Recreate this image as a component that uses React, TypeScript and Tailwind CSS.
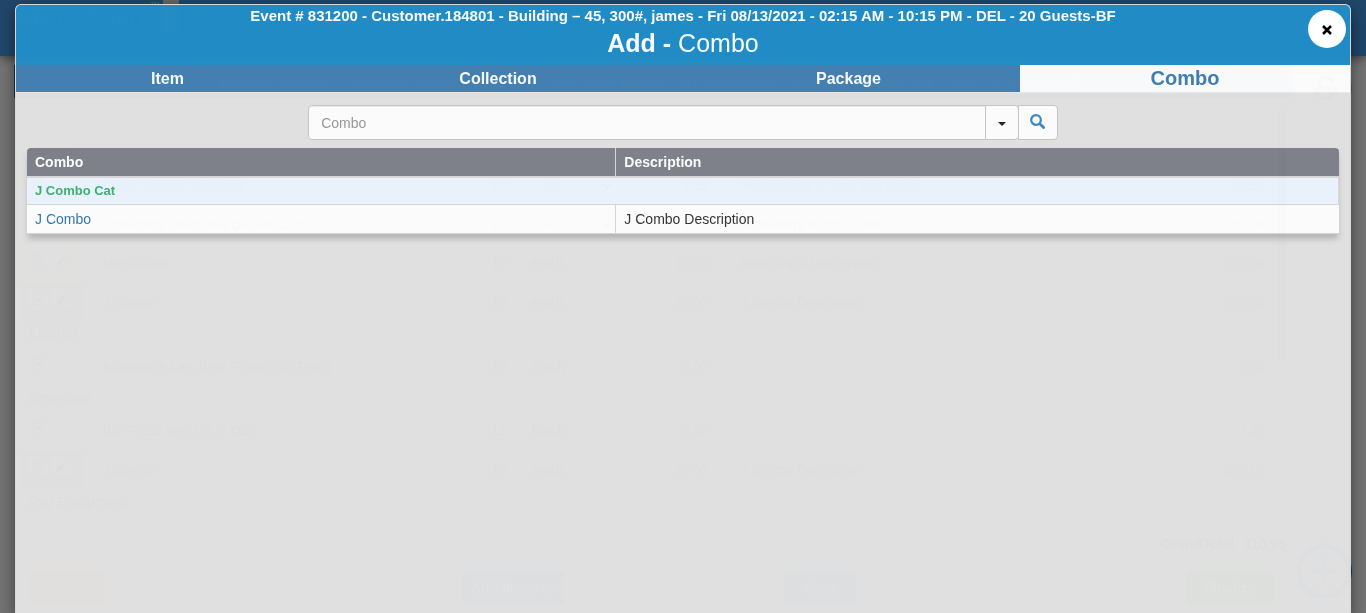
import React from "react";

type Line = {
  name: string;
  qty: string;
  unit: string;
  price: string;
  description: string;
  total: string;
  kind?: "pack" | "combo";
  picker?: boolean;
};

type Section = { title: string; lines: Line[] };

const sections: Section[] = [
  {
    title: "Menu",
    lines: [
      { name: "Cajun Seafood Sausage", qty: "10", unit: "ea", price: "3.25", description: "Housemade Shrimp and Sausage", total: "32.50", picker: true },
      { name: "Strawberry Shortcake Dessert Cup", qty: "20", unit: "ea", price: "2.50", description: "Strawberry Panna Cotta,", total: "50.00", picker: true },
      { name: "Menu Pack", qty: "10", unit: "each", price: "10.00", description: "Menu Pack Description", total: "100.00", kind: "pack" },
      { name: "J Combo", qty: "10", unit: "each", price: "20.00", description: "J Combo Description", total: "200.00", kind: "combo" },
    ],
  },
  {
    title: "Alcohol",
    lines: [{ name: "Ridgewells Eats Beer Promo (Six Pack)", qty: "10", unit: "Each", price: "0.00", description: "", total: "0.00" }],
  },
  {
    title: "Beverage",
    lines: [
      { name: "BOTTLED WATER (8 OZ)", qty: "12", unit: "Each", price: "0.60", description: "", total: "7.20" },
      { name: "J Combo", qty: "10", unit: "each", price: "20.00", description: "J Combo Description", total: "200.00", kind: "combo" },
    ],
  },
  { title: "RW Equipment", lines: [] },
];

const eventTitle =
  "Event # 831200 - Customer.184801 - Building – 45, 300#, james - Fri 08/13/2021 - 02:15 AM - 10:15 PM - DEL - 20 Guests-BF";

function TrashIcon() {
  return (
    <svg viewBox="0 0 12 14" className="h-3.5 w-3" fill="none" stroke="currentColor" strokeWidth="1.2" aria-hidden="true">
      <path d="M1 3h10M4 3V1h4v2M2 3v10h8V3M4.5 5.5v5M6 5.5v5M7.5 5.5v5" />
    </svg>
  );
}

function PencilIcon() {
  return (
    <svg viewBox="0 0 12 12" className="h-3 w-3" fill="currentColor" aria-hidden="true">
      <path d="M0 12l1-4 6-6 3 3-6 6zM8 1l1-1 3 3-1 1z" />
    </svg>
  );
}

function SectionRows({ section }: { section: Section }) {
  return (
    <>
      <tr className="h-[25px]">
        <th scope="rowgroup" colSpan={8} className="px-2 text-left text-[15px] font-normal leading-5">
          {section.title}
        </th>
      </tr>
      {section.lines.map((line, i) => (
        <tr key={i} className="h-[39px] border-t border-[#eee]">
          <td className={line.kind === "pack" ? "bg-[#f0f0c8]" : line.kind === "combo" ? "bg-[#ffb8c4]" : ""}>
            <div className="flex gap-1 px-2 pb-2">
              <button type="button" aria-label={"Delete " + line.name} className="flex h-5 w-5 items-center justify-center bg-white">
                <TrashIcon />
              </button>
              {line.kind && (
                <button type="button" aria-label={"Edit " + line.name} className="flex h-5 w-5 items-center justify-center bg-white">
                  <PencilIcon />
                </button>
              )}
            </div>
          </td>
          <td className="truncate px-5">{line.name}</td>
          <td className="px-2">
            <input readOnly aria-label="Quantity" defaultValue={line.qty} className="h-7 w-full border border-[#ddd] bg-white px-2 text-right" />
          </td>
          <td className="px-2 text-[15px]">
            {line.picker ? (
              <select aria-label="Unit" className="h-7 w-full border border-[#ddd] bg-white px-2 text-[13px]">
                <option>{line.unit}</option>
              </select>
            ) : (
              line.unit
            )}
          </td>
          <td className="px-2">
            <input readOnly aria-label="Price" defaultValue={line.price} className="h-7 w-full border border-[#ddd] bg-white px-2 text-right" />
          </td>
          <td className="px-2">
            <input readOnly aria-label="Description" defaultValue={line.description} className="h-7 w-full border border-[#ddd] bg-white px-2" />
          </td>
          <td className="px-2">
            <input readOnly aria-label="Directions" className="h-7 w-full border border-[#ddd] bg-white px-2" />
          </td>
          <td className="px-2">
            <input readOnly aria-label="Total" defaultValue={line.total} className="h-7 w-full border border-[#ddd] bg-white px-1 text-right" />
          </td>
        </tr>
      ))}
    </>
  );
}

function OrderPage() {
  return (
    <div inert className="relative flex h-screen flex-col overflow-hidden bg-white text-[13px] text-[#4d4d4d]">
      <header className="flex h-14 shrink-0 bg-[#499cea] px-4 text-[#ddd] shadow-[0_2px_10px_rgba(0,0,0,0.5)]">
        <div className="w-1/3">
          <div className="flex h-8 items-start gap-[3px]">
            <span className="text-[28px] font-bold leading-8">ater</span>
            <span className="w-3 text-center text-[26px] leading-7">:</span>
            <span className="text-[24px] font-bold italic leading-8">Xpert</span>
            <span className="text-[10px] leading-3">™</span>
            <span className="h-8 w-4 bg-[#ddd]" />
          </div>
          <p className="text-xs leading-6">Caterer : Ridgewells Cateri...</p>
        </div>
        <h1 className="flex-1 pt-2 text-center text-[26px] leading-8">Event Order</h1>
        <p className="w-1/3 pr-14 pt-4 text-right">Superadmin As Caterer Admini</p>
      </header>
      <div className="flex gap-2 pl-[14px] pt-[9px]">
        <h2 className="h-[33px] flex-1 truncate bg-[#337ab7] text-center text-[15px] font-bold leading-[33px] text-[#9cc]">
          {eventTitle}
        </h2>
        <div className="mr-3 h-[33px] w-[54px]">
          <button type="button" aria-label="Print" className="flex h-[46px] w-[52px] items-center justify-center rounded-full border border-[#ccc]">
            <svg viewBox="0 0 24 24" className="h-6 w-6" fill="none" stroke="currentColor" strokeWidth="3" aria-hidden="true">
              <path d="M6 10V2h9l3 3v5M2 19v-7h20v7M6 16h12v6H6z" />
            </svg>
          </button>
        </div>
      </div>
      <div className="flex pl-5 pr-20 pt-[13px]">
        <table className="w-full table-fixed border-collapse">
          <colgroup>
            <col className="w-[5%]" />
            <col className="w-[27%]" />
            <col className="w-[8%]" />
            <col className="w-[8%]" />
            <col className="w-[8%]" />
            <col className="w-[17%]" />
            <col className="w-[17%]" />
            <col className="w-[10%]" />
          </colgroup>
          <thead>
            <tr className="h-[30px] bg-[#d9d9d9] text-left text-white">
              <th className="px-2" />
              {["Name", "Quantity", "Unit", "Price", "Description", "Directions", "Total"].map((h) => (
                <th key={h} scope="col" className="px-2 text-sm font-bold">{h}</th>
              ))}
            </tr>
          </thead>
          <tbody>
            {sections.map((s) => (
              <SectionRows key={s.title} section={s} />
            ))}
          </tbody>
        </table>
        <div className="h-[248px] w-2 shrink-0 bg-[#999]" />
      </div>
      <p className="pr-20 pt-5 text-right text-sm font-bold">GrandTotal: 810.95</p>
      <div className="mt-[18px] grid grid-cols-[432fr_323fr_402fr_87fr] pl-[30px] pr-[92px] text-sm font-bold text-white">
        <button type="button" className="h-8 w-[74px] rounded bg-[#f0ad4e]">Close ✕</button>
        <button type="button" className="h-8 w-[102px] rounded bg-[#337ab7]">Add Items ⊕</button>
        <button type="button" className="h-8 w-[72px] rounded bg-[#337ab7]">Save</button>
        <button type="button" className="h-8 w-[88px] rounded bg-[#5cb85c]">Finalize</button>
      </div>
      <button type="button" aria-label="Add" className="absolute bottom-[14px] right-[14px] flex h-14 w-14 items-center justify-center rounded-full border-[6px] border-[#337ab7]">
        <svg viewBox="0 0 24 24" className="h-6 w-6" stroke="#337ab7" strokeWidth="6" aria-hidden="true">
          <path d="M12 0v24M0 12h24" />
        </svg>
      </button>
    </div>
  );
}

const tabs = ["Item", "Collection", "Package", "Combo"];

function ComboDialog() {
  return (
    <div className="fixed inset-0 flex overflow-hidden bg-black/55 px-[15px] pt-1">
      <div role="dialog" aria-modal="true" aria-labelledby="dialog-title" className="relative flex flex-1">
        <div className="flex flex-1 flex-col overflow-hidden rounded-t-md border border-b-0 border-[#dcdcdc] bg-[#e4e4e4] opacity-[0.97] shadow-[0_5px_15px_rgba(0,0,0,0.5)]">
          <header className="h-[60px] bg-[#208dc7] text-center text-white">
            <p className="truncate pt-px text-[15px] font-bold leading-5">{eventTitle}</p>
            <h2 id="dialog-title" className="pt-[3px] text-[25px] font-normal leading-7">
              <b>Add - </b>Combo
            </h2>
          </header>
          <div role="tablist" className="grid grid-cols-[303fr_358fr_343fr_330fr] border-b border-[#eee]">
            {tabs.map((tab) => (
              <button
                key={tab}
                type="button"
                role="tab"
                aria-selected={tab === "Combo"}
                className={
                  tab === "Combo"
                    ? "h-[27px] bg-white pb-0.5 text-xl leading-6 font-bold text-[#4380b5]"
                    : "h-[27px] bg-[#4682b4] text-base leading-6 font-bold text-white"
                }
              >
                {tab}
              </button>
            ))}
          </div>
          <div className="px-[11px] pt-3">
            <form className="mx-auto flex h-[35px] w-4/7 max-w-[750px]" onSubmit={(e) => e.preventDefault()}>
              <input
                type="text"
                aria-label="Combo"
                placeholder="Combo"
                className="min-w-0 flex-1 rounded-l border border-[#c8c8c8] bg-white px-3 text-sm outline-none shadow-[inset_0_1px_1px_rgba(0,0,0,0.075)] placeholder:text-[#999]"
              />
              <button type="button" aria-label="Search options" className="-ml-px flex w-[34px] items-center justify-center rounded-r border border-[#c8c8c8] bg-white pt-0.5">
                <svg viewBox="0 0 8 4" className="h-1 w-2" aria-hidden="true">
                  <path d="M0 0h8L4 4z" fill="#222" />
                </svg>
              </button>
              <button type="submit" aria-label="Search" className="-ml-px flex w-10 items-center justify-center rounded-r border border-[#c8c8c8] bg-white pb-0.5">
                <svg viewBox="0 0 14 14" className="h-[15px] w-[15px]" fill="none" stroke="#3d87c8" aria-hidden="true">
                  <circle cx="5.6" cy="5.6" r="4.5" strokeWidth="2.1" />
                  <path d="M9.3 9.3l3.4 3.4" strokeWidth="2.6" strokeLinecap="round" />
                </svg>
              </button>
            </form>
            <div className="mt-2 overflow-hidden rounded-t shadow-[0_6px_6px_-1px_rgba(0,0,0,0.2)]">
              <table className="w-full table-fixed border-collapse text-left text-sm leading-5 text-[#333]">
                <colgroup>
                  <col className="w-[44.9%]" />
                  <col />
                </colgroup>
                <thead>
                  <tr className="h-[29px] border-b-2 border-[#d9d9d9] bg-[#7f828b] text-white">
                    <th scope="col" className="border-r border-[#d9d9d9] px-2 font-bold">Combo</th>
                    <th scope="col" className="px-2 font-bold">Description</th>
                  </tr>
                </thead>
                <tbody>
                  <tr className="h-[27px] border-b border-[#d9d9d9] bg-[#edf6ff]">
                    <th scope="rowgroup" colSpan={2} className="border-r border-[#d9d9d9] px-2 text-[13px] font-bold text-[#3cb371]">J Combo Cat</th>
                  </tr>
                  <tr className="h-[29px] border-b border-[#d9d9d9] bg-white">
                    <td className="border-r border-[#d9d9d9] px-2">
                      <a href="#j-combo" className="text-[#337ab7]">J Combo</a>
                    </td>
                    <td className="px-2">J Combo Description</td>
                  </tr>
                </tbody>
              </table>
            </div>
          </div>
        </div>
        <button type="button" aria-label="Close" className="absolute right-[5px] top-1.5 flex h-[38px] w-[38px] items-center justify-center rounded-full bg-white pt-px">
          <svg viewBox="0 0 10 10" className="h-2.5 w-2.5" stroke="#000" strokeWidth="2.6" aria-hidden="true">
            <path d="M1 1l8 8M9 1L1 9" />
          </svg>
        </button>
      </div>
    </div>
  );
}

export default function App() {
  return (
    <div className="font-['Liberation_Sans',Arial,sans-serif]">
      <OrderPage />
      <ComboDialog />
    </div>
  );
}
